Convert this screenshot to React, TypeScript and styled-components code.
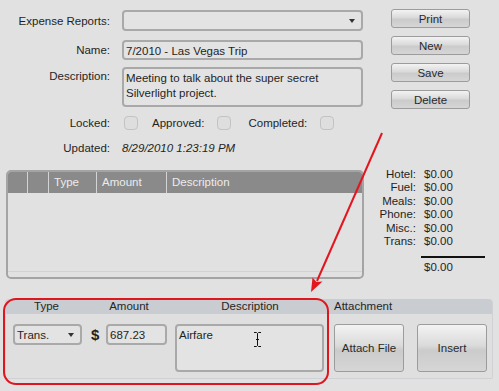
import React from "react";
import styled, { createGlobalStyle } from "styled-components";

const GlobalStyle = createGlobalStyle`
  body {
    margin: 0;
    background: #e1e1e1;
  }
`;

const Page = styled.div`
  position: relative;
  width: 499px;
  height: 391px;
  overflow: hidden;
  background: #e1e1e1;
  font-family: "Liberation Sans", Arial, sans-serif;
  font-size: 11.5px;
  color: #1f1f1f;
`;

const Top = styled.div`
  display: flex;
  padding-top: 9px;
`;

const Form = styled.div`
  width: 365px;
`;

const FormRow = styled.div<{ $mt: number; $align?: string }>`
  display: grid;
  grid-template-columns: 110px 241px;
  column-gap: 12px;
  align-items: ${(p) => p.$align || "center"};
  margin-top: ${(p) => p.$mt}px;
`;

const Label = styled.div<{ $pt?: number }>`
  text-align: right;
  padding-top: ${(p) => p.$pt || 0}px;
  white-space: nowrap;
`;

const Field = styled.div<{ $h: number }>`
  box-sizing: border-box;
  position: relative;
  height: ${(p) => p.$h}px;
  border: 2px solid #a9a9a9;
  border-radius: 4px;
  background: #e3e3e3;
  padding: 2px 2px 0 2px;
  line-height: 15px;
  white-space: pre-line;
`;

const ComboArrow = styled.span`
  position: absolute;
  right: 6px;
  top: 7px;
  width: 0;
  height: 0;
  border-left: 3px solid transparent;
  border-right: 3px solid transparent;
  border-top: 4px solid #333;
`;

const CheckRow = styled.div`
  display: flex;
  align-items: center;
  height: 15px;
`;

const Check = styled.span<{ $ml?: number; $mr?: number }>`
  box-sizing: border-box;
  width: 14px;
  height: 14px;
  border: 1px solid #c3c3c3;
  border-radius: 4px;
  background: #dedede;
  margin-left: ${(p) => p.$ml ?? 2}px;
  margin-right: ${(p) => p.$mr || 0}px;
`;

const Updated = styled.div`
  font-style: italic;
`;

const Buttons = styled.div`
  display: flex;
  flex-direction: column;
  gap: 8px;
  margin-left: 26px;
  width: 79px;
`;

const Button = styled.div<{ $h?: number; $w?: number }>`
  box-sizing: border-box;
  display: flex;
  align-items: center;
  justify-content: center;
  height: ${(p) => p.$h || 19}px;
  width: ${(p) => (p.$w ? `${p.$w}px` : "100%")};
  border: 1px solid #9c9c9c;
  border-radius: 3px;
  background: linear-gradient(#f3f3f3, #dadada 45%, #cbcbcb 55%, #d6d6d6);
  color: #2a2a2a;
`;

const Middle = styled.div`
  display: flex;
  margin-top: 16px;
  padding-left: 6px;
`;

const DataGrid = styled.div`
  box-sizing: border-box;
  width: 358px;
  height: 109px;
  border: 2px solid #a4a4a4;
  border-radius: 5px;
  background: #e1e1e1;
  overflow: hidden;
  position: relative;
`;

const GridHeader = styled.div`
  display: flex;
  height: 21px;
  background: #8a8a8a;
  color: #ececec;
`;

const HeadCell = styled.div<{ $w?: number; $first?: boolean }>`
  box-sizing: border-box;
  width: ${(p) => (p.$w ? `${p.$w}px` : "auto")};
  flex: ${(p) => (p.$w ? "none" : 1)};
  border-left: ${(p) => (p.$first ? "none" : "1px solid #d4d4d4")};
  padding: 4px 0 0 5px;
`;

const GridFoot = styled.div`
  position: absolute;
  left: 0;
  right: 0;
  bottom: 5px;
  border-top: 1px solid #d2d2d2;
`;

const Summary = styled.div`
  display: grid;
  grid-template-columns: 46px 62px;
  column-gap: 8px;
  margin-left: 6px;
  margin-top: -2px;
  line-height: 13.4px;
  align-content: start;
`;

const SumLabel = styled.div`
  text-align: right;
`;

const SumRule = styled.div`
  grid-column: 2;
  margin: 8px 0 0 -3px;
  width: 64px;
  height: 2px;
  background: #111;
`;

const SumTotal = styled.div`
  grid-column: 2;
  margin-top: 3px;
`;

const Panel = styled.div`
  box-sizing: border-box;
  margin: 20px 0 0 5px;
  width: 488px;
  height: 80px;
  border: 1px solid #cfd1d4;
  border-top: none;
  border-radius: 4px 4px 2px 2px;
  background: #dfdfdf;
`;

const PanelGrid = styled.div`
  display: grid;
  grid-template-columns: 81px 84px 158px 1fr;
`;

const PanelHead = styled.div<{ $left?: boolean }>`
  height: 15px;
  line-height: 15px;
  background: #c9ccd0;
  text-align: ${(p) => (p.$left ? "left" : "center")};
  padding-left: ${(p) => (p.$left ? 5 : 0)}px;
  color: #262626;
  &:first-child {
    border-top-left-radius: 4px;
  }
  &:nth-child(4) {
    border-top-right-radius: 4px;
  }
`;

const Cell = styled.div<{ $pl: number; $gap?: number }>`
  display: flex;
  align-items: flex-start;
  gap: ${(p) => p.$gap ?? 7}px;
  padding: 10px 0 0 ${(p) => p.$pl}px;
`;

const Dollar = styled.span`
  font-weight: bold;
  font-size: 15px;
  line-height: 21px;
  width: 8px;
`;

const Callout = styled.div`
  position: absolute;
  left: 3px;
  top: 298px;
  width: 326px;
  height: 87px;
  box-sizing: border-box;
  border: 2px solid #e0161f;
  border-radius: 13px;
  pointer-events: none;
`;

const Overlay = styled.svg`
  position: absolute;
  left: 0;
  top: 0;
  pointer-events: none;
`;

const Cursor = styled.svg`
  position: absolute;
  left: 76px;
  top: 5px;
`;

export default function App() {
  const totals = ["Hotel:", "Fuel:", "Meals:", "Phone:", "Misc.:", "Trans:"];
  return (
    <Page>
      <GlobalStyle />
      <Top>
        <Form>
          <FormRow $mt={1}>
            <Label>Expense Reports:</Label>
            <Field $h={21}>
              <ComboArrow />
            </Field>
          </FormRow>
          <FormRow $mt={9}>
            <Label>Name:</Label>
            <Field $h={20}>7/2010 - Las Vegas Trip</Field>
          </FormRow>
          <FormRow $mt={7} $align="start">
            <Label $pt={3}>Description:</Label>
            <Field $h={40}>
              {"Meeting to talk about the super secret\nSilverlight project."}
            </Field>
          </FormRow>
          <FormRow $mt={8}>
            <Label>Locked:</Label>
            <CheckRow>
              <Check $mr={14} />
              Approved:
              <Check $ml={13} $mr={17} />
              Completed:
              <Check $ml={13} />
            </CheckRow>
          </FormRow>
          <FormRow $mt={12}>
            <Label>Updated:</Label>
            <Updated>8/29/2010 1:23:19 PM</Updated>
          </FormRow>
        </Form>
        <Buttons>
          <Button>Print</Button>
          <Button>New</Button>
          <Button>Save</Button>
          <Button>Delete</Button>
        </Buttons>
      </Top>

      <Middle>
        <DataGrid>
          <GridHeader>
            <HeadCell $w={19} $first />
            <HeadCell $w={21} />
            <HeadCell $w={48}>Type</HeadCell>
            <HeadCell $w={70}>Amount</HeadCell>
            <HeadCell>Description</HeadCell>
          </GridHeader>
          <GridFoot />
        </DataGrid>
        <Summary>
          {totals.map((t) => (
            <React.Fragment key={t}>
              <SumLabel>{t}</SumLabel>
              <div>$0.00</div>
            </React.Fragment>
          ))}
          <SumRule />
          <SumTotal>$0.00</SumTotal>
        </Summary>
      </Middle>

      <Panel>
        <PanelGrid>
          <PanelHead>Type</PanelHead>
          <PanelHead>Amount</PanelHead>
          <PanelHead>Description</PanelHead>
          <PanelHead $left>Attachment</PanelHead>
          <Cell $pl={7}>
            <Field $h={21} style={{ width: 69 }}>
              Trans.
              <ComboArrow />
            </Field>
          </Cell>
          <Cell $pl={4}>
            <Dollar>$</Dollar>
            <Field $h={21} style={{ width: 61 }}>
              687.23
            </Field>
          </Cell>
          <Cell $pl={4}>
            <Field $h={48} style={{ width: 149 }}>
              Airfare
              <Cursor width="9" height="17" viewBox="0 0 9 17">
                <path
                  d="M1 1.5h2.5l1 1 1-1H8M4.5 2.5v12M1 15.5h2.5l1-1 1 1H8M3 8.5h3"
                  fill="none"
                  stroke="#111"
                  strokeWidth="1"
                />
              </Cursor>
            </Field>
          </Cell>
          <Cell $pl={5} $gap={13}>
            <Button $h={48} $w={70}>
              Attach File
            </Button>
            <Button $h={48} $w={70}>
              Insert
            </Button>
          </Cell>
        </PanelGrid>
      </Panel>

      <Callout />
      <Overlay width="499" height="391" viewBox="0 0 499 391">
        <line x1="382" y1="133" x2="317" y2="281" stroke="#e3161f" strokeWidth="2" />
        <path d="M311 292 L312.5 277.5 L316.5 282 L322.5 281.5 Z" fill="#e3161f" />
      </Overlay>
    </Page>
  );
}
